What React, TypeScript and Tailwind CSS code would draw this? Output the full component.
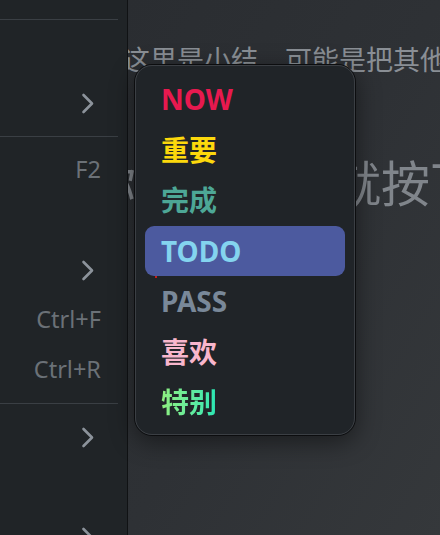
const font = { fontFamily: '"Noto Sans CJK SC", "Noto Sans", sans-serif' };
const latin = { fontFamily: '"Noto Sans", "Noto Sans CJK SC", sans-serif' };

type Row = { kind: 'sep' } | { kind: 'row'; hint?: string; sub?: boolean };

const sidebarRows: Row[] = [
  { kind: 'sep' },
  { kind: 'row' },
  { kind: 'row', sub: true },
  { kind: 'sep' },
  { kind: 'row', hint: 'F2' },
  { kind: 'row' },
  { kind: 'row', sub: true },
  { kind: 'row', hint: 'Ctrl+F' },
  { kind: 'row', hint: 'Ctrl+R' },
  { kind: 'sep' },
  { kind: 'row', sub: true },
  { kind: 'row' },
  { kind: 'row', sub: true },
];

const tags = [
  { label: 'NOW', cls: 'text-[#e8194f]' },
  { label: '重要', cls: 'text-[#fcd80c]' },
  { label: '完成', cls: 'text-[#4da796]' },
  { label: 'TODO', cls: 'text-[#84d4ef]', active: true },
  { label: 'PASS', cls: 'text-[#798899]' },
  { label: '喜欢', cls: 'text-[#f8b6cc]' },
  { label: '特别', cls: 'bg-gradient-to-r from-[#8ef07e] to-[#22e6b4] bg-clip-text text-transparent' },
];

const Chevron = () => (
  <svg width="14" height="21" viewBox="0 0 14 21" className="mr-[6px]" fill="none">
    <path d="M2.5 2 L11 10.5 L2.5 19" stroke="#8c939b" strokeWidth="2.6" strokeLinecap="round" strokeLinejoin="round" />
  </svg>
);

export default function App() {
  return (
    <div className="relative flex h-[535px] w-[440px] overflow-hidden bg-[#2b2e32]" style={font}>
      <aside className="flex w-[127px] shrink-0 flex-col bg-[#202427] pt-[11px]">
        {sidebarRows.map((r, i) =>
          r.kind === 'sep' ? (
            <div key={i} className="py-[8px] pr-[9px]">
              <div className="h-px bg-[#3a3f44]" />
            </div>
          ) : (
            <div
              key={i}
              className="flex h-[50px] shrink-0 items-center justify-end pr-[26px] text-[23.5px] text-[#6b7177]"
              style={latin}
            >
              {r.hint}
              {r.sub && <Chevron />}
            </div>
          )
        )}
      </aside>
      <div className="w-px shrink-0 bg-[#101214]" />
      <main className="relative flex-1 overflow-hidden bg-gradient-to-br from-[#2a2d31] via-[#2e3135] to-[#35383b]">
        <p className="ml-[-5px] mt-[42px] whitespace-nowrap text-[27px] leading-[34px] text-[#8a8f95]">
          这里是小结，可能是把其他
        </p>
        <p className="ml-[-41px] mt-[77px] whitespace-nowrap text-[49px] leading-[56px] text-[#80858b]">
          你可以直接就按下
        </p>
      </main>

      <div className="absolute left-[134px] top-[64px] w-[222px] rounded-[18px] border border-[#0c0d0f] bg-[#202428] shadow-[0_6px_24px_rgba(0,0,0,0.45)]">
        <div className="rounded-[17px] border border-[#3b3f44] px-[9px] pb-[6px] pt-[8px]">
          {tags.map((t) => (
            <div
              key={t.label}
              className={`flex h-[50.5px] items-center rounded-[9px] pl-[16px] text-[28px] font-bold leading-none ${t.active ? 'bg-[#4c5a9f]' : ''}`}
              style={latin}
            >
              <span className={t.cls}>{t.label}</span>
            </div>
          ))}
        </div>
      </div>
      <div className="absolute left-[155px] top-[276px] h-[2px] w-[2px] rounded-full bg-[#ff1a1a]" />
    </div>
  );
}
